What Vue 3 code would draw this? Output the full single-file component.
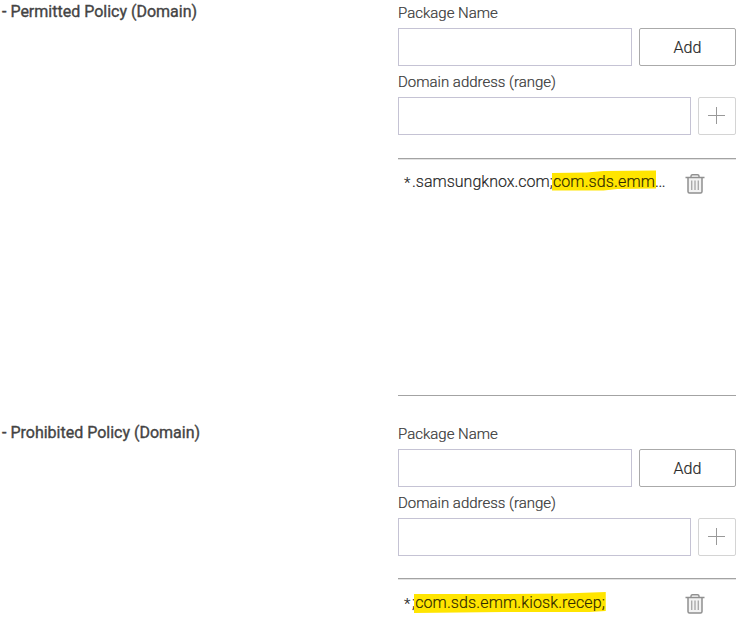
<script setup>
const policies = [
  {
    name: 'permitted',
    title: '- Permitted Policy (Domain)',
    prefix: '.samsungknox.com;',
    marked: 'com.sds.emm',
    suffix: '...',
    box: '0 0 105 22',
    shape: 'M0 3 L35 2.5 L52 1 L105 .5 V18.5 L66 19 L52 20.5 H0 Z',
  },
  {
    name: 'prohibited',
    title: '- Prohibited Policy (Domain)',
    prefix: ';',
    marked: 'com.sds.emm.kiosk.recep;',
    suffix: '',
    box: '0 0 192 22',
    shape: 'M0 2 L90 2 L150 1.5 L192 0 V19 L176 20 L90 20 L0 21 Z',
  },
]
</script>

<template>
  <main class="page">
    <section v-for="p in policies" :key="p.name" class="policy" :class="p.name">
      <h2 class="title"><span>{{ p.title }}</span></h2>
      <div class="controls">
        <label class="label package">Package Name</label>
        <div class="row">
          <input class="field" type="text" aria-label="Package Name" />
          <button class="add" type="button"><span>Add</span></button>
        </div>
        <label class="label domain">Domain address (range)</label>
        <div class="row">
          <input class="field" type="text" aria-label="Domain address (range)" />
          <button class="plus" type="button" aria-label="Add domain">
            <svg width="18" height="18" viewBox="0 0 18 18"><path d="M0 8.5H17M8.5 0V17" /></svg>
          </button>
        </div>
        <div class="list">
          <div class="item">
            <div class="address">
              <span class="star">*</span><span class="prefix">{{ p.prefix }}</span><span class="marked"><svg class="highlight" :viewBox="p.box" preserveAspectRatio="none"><path :d="p.shape" /></svg><span class="value">{{ p.marked }}</span></span><span class="suffix">{{ p.suffix }}</span>
            </div>
            <svg class="trash" width="20" height="22" viewBox="0 0 20 22">
              <path class="body" d="M3 5V18.5Q3 20 4.5 20H15.5Q17 20 17 18.5V5" />
              <path class="lid" d="M.5 4.5H19.5M6 4V3Q6 1.7 7.5 1.7H12.5Q14 1.7 14 3V4" />
              <path class="slots" d="M6.7 7.5V17M10 7.5V17M13.3 7.5V17" />
            </svg>
          </div>
        </div>
      </div>
    </section>
  </main>
</template>

<style>
body { background: #fff; overflow: hidden; }
</style>

<style scoped>
* { box-sizing: border-box; }
.page { width: 747px; height: 632px; overflow: hidden; font-family: Roboto, sans-serif; color: #333; }
.policy { display: flex; height: 421px; }
.title { width: 398px; flex: none; margin: 0; padding: 2px 0 0 2px; font-size: 16px; line-height: 20px; font-weight: 400; -webkit-text-stroke: .35px #444; letter-spacing: 0; color: #444; white-space: nowrap; }
.controls { width: 338px; flex: none; }
.label { display: block; font-size: 15px; font-weight: 300; line-height: 20px; white-space: nowrap; -webkit-text-stroke: .2px #444; }
.package { margin: 3px 0 5px; }
.domain { margin: 6px 0 5px; }
.row { display: flex; gap: 7px; height: 38px; }
.field { flex: 1; min-width: 0; border: 1px solid #c5c3d4; background: #fff; padding: 0 8px; outline: 0; border-radius: 0; }
.add, .plus { display: flex; align-items: center; justify-content: center; padding: 0; background: #fff; border-radius: 2px; }
.add { width: 97px; border: 1px solid #aaa; padding-top: 2px; font: 300 16px/20px Roboto, sans-serif; color: #222; -webkit-text-stroke: .2px #333; }
.plus { width: 38px; border: 1px solid #d4d4d4; }
.plus path { fill: none; stroke: #999; stroke-width: 1; }
.list { height: 238px; margin-top: 23px; border-top: 1px solid #a3a3a3; border-bottom: 1px solid #a3a3a3; box-shadow: inset 0 1px #e3e3e3; }
.prohibited .list { margin-top: 22px; }
.item { display: flex; justify-content: space-between; padding: 12px 31px 0 6px; }
.address { font-size: 16px; font-weight: 300; line-height: 22px; white-space: nowrap; display: flex; color: #222; -webkit-text-stroke: .15px; }
.prohibited .address { padding-top: 1px; }
.star { width: 8px; font-size: 15px; padding-top: 1px; }
.marked { position: relative; }
.highlight { position: absolute; left: -1px; top: -1px; width: calc(100% + 2px); height: 22px; fill: #ffe500; }
.prohibited .highlight { top: 0; }
.value { position: relative; color: #302900; letter-spacing: .12px; }
.suffix { letter-spacing: -.4px; }
.trash { margin-top: 2px; fill: none; stroke: #909090; }
.body { stroke-width: 1.5; fill: #f3f3f3; }
.lid { stroke-width: 1.4; }
.slots { stroke: #aaa; stroke-width: 1.4; }
</style>
